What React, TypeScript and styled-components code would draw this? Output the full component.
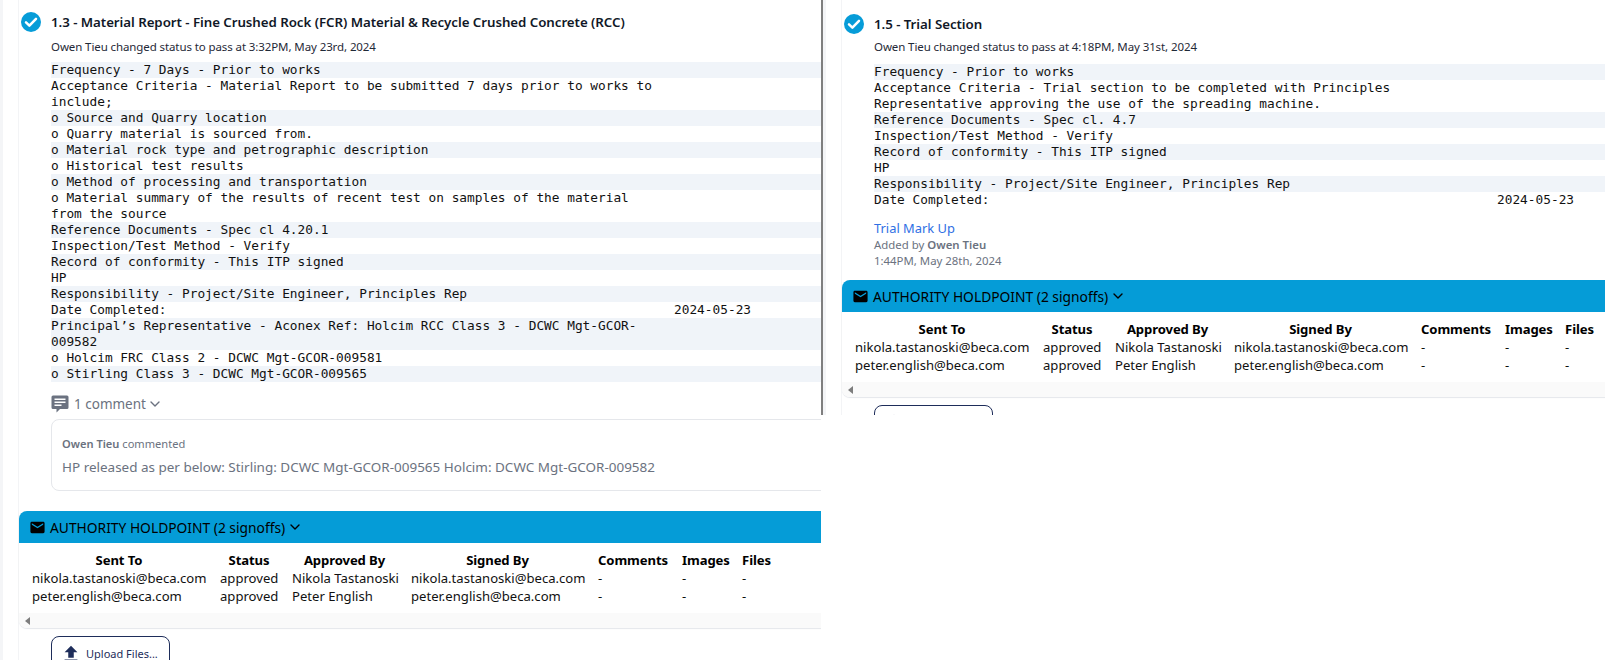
import React from "react";
import styled, { createGlobalStyle } from "styled-components";

const Global = createGlobalStyle`
  html, body { margin: 0; padding: 0; background: #fff; }
  body { font-family: "Noto Sans", "Liberation Sans", sans-serif; color: #000; overflow: hidden; }
`;

const Page = styled.div`
  display: flex;
  width: 1605px;
  height: 660px;
  align-items: flex-start;
  overflow: hidden;
`;

const Panel = styled.section<{ $left?: boolean }>`
  flex: none;
  box-sizing: border-box;
  overflow: hidden;
  background: #fff;
  width: ${(p) => (p.$left ? "821px" : "784px")};
  height: ${(p) => (p.$left ? "660px" : "415px")};
  padding-left: 3px;
  box-shadow: inset 3px 0 0 #f4f5f7;
  ${(p) => (p.$left ? "" : "border-left: 2px solid #7f7f7f;")}
`;

const Card = styled.article<{ $top: number }>`
  width: 900px;
  height: 100%;
  margin-left: 16px;
  box-sizing: border-box;
  padding-top: ${(p) => p.$top}px;
  box-shadow: -1px 0 0 #f3f4f6;
`;

const Head = styled.header`
  display: flex;
  align-items: center;
  gap: 10px;
  height: 20px;
  padding-left: 2px;
`;

const Title = styled.h3`
  margin: 0;
  font-size: 13.3px;
  font-weight: 600;
  letter-spacing: -0.05px;
  line-height: 20px;
  white-space: nowrap;
  color: #111827;
`;

const Indented = styled.div`
  padding-left: 32px;
`;

const StatusLine = styled.p<{ $gapTop: number; $gapBottom: number }>`
  margin: ${(p) => p.$gapTop}px 0 ${(p) => p.$gapBottom}px;
  font-size: 11.5px;
  line-height: 17px;
  letter-spacing: -0.1px;
  color: #1f2937;
  white-space: nowrap;
`;

const Grid = styled.div`
  font-family: "DejaVu Sans Mono", "Liberation Mono", monospace;
  font-size: 12.8px;
  line-height: 16px;
  color: #111;
`;

const Row = styled.div`
  display: grid;
  grid-template-columns: 610px 1fr;
  column-gap: 13px;
  &:nth-child(odd) { background: #f0f4f9; }
`;

const Comments = styled.div`
  margin-top: 13px;
`;

const CommentToggle = styled.div`
  display: flex;
  align-items: center;
  gap: 3px;
  height: 18px;
  font-size: 13.5px;
  color: #6b7280;
  & > span { margin-left: 2px; }
`;

const CommentBox = styled.div`
  box-sizing: border-box;
  height: 72px;
  margin-top: 6px;
  padding: 15px 10px;
  border: 1px solid #e5e7eb;
  border-radius: 8px;
`;

const CommentMeta = styled.div`
  font-size: 11.1px;
  line-height: 17px;
  color: #6b7280;
  & b { font-weight: 600; }
`;

const CommentText = styled.div`
  margin-top: 6px;
  font-size: 13.48px;
  line-height: 18px;
  color: #6b7280;
  white-space: nowrap;
`;

const Attachment = styled.div`
  margin-top: 11px;
`;

const FileLink = styled.a`
  display: block;
  font-size: 12.9px;
  line-height: 18px;
  color: #2f6fe4;
`;

const FileMeta = styled.div`
  font-size: 11.4px;
  line-height: 16px;
  color: #6b7280;
  & b { font-weight: 600; }
`;

const Authority = styled.div<{ $top: number }>`
  margin-top: ${(p) => p.$top}px;
  border-radius: 8px;
  background: #fff;
  box-shadow: 0 1px 1px #e5e7eb;
  overflow: hidden;
`;

const AuthorityBar = styled.div`
  display: flex;
  align-items: center;
  gap: 4px;
  height: 32px;
  padding-left: 10px;
  background: #059cd7;
  font-size: 13.8px;
  color: #000;
  white-space: nowrap;
`;

const TableWrap = styled.div`
  padding: 8px 0 8px 6px;
`;

const Table = styled.table`
  border-collapse: collapse;
  table-layout: fixed;
  width: 753px;
  font-size: 13.1px;
  line-height: 18px;
`;

const Th = styled.th<{ $w: number }>`
  box-sizing: border-box;
  width: ${(p) => p.$w}px;
  padding: 0 7px;
  font-weight: 700;
  letter-spacing: -0.1px;
  text-align: center;
  white-space: nowrap;
  overflow: visible;
`;

const Td = styled.td`
  padding: 0 7px;
  white-space: nowrap;
  color: #111;
`;

const ScrollTrack = styled.div`
  display: flex;
  align-items: center;
  height: 15px;
  padding-left: 6px;
  background: #fafafa;
`;

const ScrollArrow = styled.span`
  width: 0;
  height: 0;
  border-style: solid;
  border-width: 4px 5px 4px 0;
  border-color: transparent #7d7d7d transparent transparent;
`;

const UploadButton = styled.button`
  display: flex;
  align-items: center;
  gap: 4px;
  box-sizing: border-box;
  width: 119px;
  height: 35px;
  margin-top: 8px;
  padding: 0 0 0 8px;
  border: 1px solid #1e2d5a;
  border-radius: 8px;
  background: #fff;
  font-family: inherit;
  font-size: 11px;
  color: #1e2d5a;
  white-space: nowrap;
`;

const CheckBadge = () => (
  <svg width="20" height="20" viewBox="0 0 20 20" style={{ flex: "none" }}>
    <circle cx="10" cy="10" r="10" fill="#069cd8" />
    <path d="M5 10.4l3.4 3.3L15 6.8" fill="none" stroke="#fff" strokeWidth="2.5" strokeLinecap="round" strokeLinejoin="round" />
  </svg>
);

const Chevron = () => (
  <svg width="12" height="12" viewBox="0 0 12 12">
    <path d="M2 4l4 4 4-4" fill="none" stroke="currentColor" strokeWidth="1.4" strokeLinecap="round" strokeLinejoin="round" />
  </svg>
);

const ChatIcon = () => (
  <svg width="18" height="18" viewBox="0 0 18 18">
    <path
      fillRule="evenodd"
      fill="#6b7280"
      d="M2 0.5h14a1.5 1.5 0 0 1 1.5 1.5v10.5a1.5 1.5 0 0 1-1.5 1.5H9l-3.5 3.5V14H2a1.5 1.5 0 0 1-1.5-1.5V2A1.5 1.5 0 0 1 2 .5zM3.5 3.5v1.5h11V3.5zM3.5 6.5V8h11V6.5zM3.5 9.5V11h7V9.5z"
    />
  </svg>
);

const MailIcon = () => (
  <svg width="17" height="17" viewBox="0 0 24 24">
    <path d="M20 4H4c-1.1 0-1.99.9-1.99 2L2 18c0 1.1.9 2 2 2h16c1.1 0 2-.9 2-2V6c0-1.1-.9-2-2-2zm0 4l-8 5-8-5V6l8 5 8-5v2z" />
  </svg>
);

const UploadIcon = () => (
  <svg width="22" height="22" viewBox="0 0 24 24">
    <path fill="#1e2d5a" d="M9 16h6v-6h4l-7-7-7 7h4zm-4 2h14v2H5z" />
  </svg>
);

const columns: [string, number][] = [
  ["Sent To", 188],
  ["Status", 72],
  ["Approved By", 119],
  ["Signed By", 187],
  ["Comments", 84],
  ["Images", 60],
  ["Files", 43],
];

const signoffs = [
  ["nikola.tastanoski@beca.com", "approved", "Nikola Tastanoski", "nikola.tastanoski@beca.com", "-", "-", "-"],
  ["peter.english@beca.com", "approved", "Peter English", "peter.english@beca.com", "-", "-", "-"],
];

const AuthoritySection = ({ top }: { top: number }) => (
  <>
    <Authority $top={top}>
      <AuthorityBar>
        <MailIcon />
        <span>AUTHORITY HOLDPOINT (2 signoffs)</span>
        <Chevron />
      </AuthorityBar>
      <TableWrap>
        <Table>
          <thead>
            <tr>
              {columns.map(([name, w]) => (
                <Th key={name} $w={w}>{name}</Th>
              ))}
            </tr>
          </thead>
          <tbody>
            {signoffs.map((row) => (
              <tr key={row[0]}>
                {row.map((cell, i) => (
                  <Td key={i}>{cell}</Td>
                ))}
              </tr>
            ))}
          </tbody>
        </Table>
      </TableWrap>
      <ScrollTrack>
        <ScrollArrow />
      </ScrollTrack>
    </Authority>
    <Indented>
      <UploadButton>
        <UploadIcon />
        Upload Files...
      </UploadButton>
    </Indented>
  </>
);

const Rows = ({ rows }: { rows: [string, string?][] }) => (
  <Grid>
    {rows.map(([a, b], i) => (
      <Row key={i}>
        <div>{a}</div>
        <div>{b}</div>
      </Row>
    ))}
  </Grid>
);

const leftRows: [string, string?][] = [
  ["Frequency - 7 Days - Prior to works"],
  ["Acceptance Criteria - Material Report to be submitted 7 days prior to works to include;"],
  ["o Source and Quarry location"],
  ["o Quarry material is sourced from."],
  ["o Material rock type and petrographic description"],
  ["o Historical test results"],
  ["o Method of processing and transportation"],
  ["o Material summary of the results of recent test on samples of the material from the source"],
  ["Reference Documents - Spec cl 4.20.1"],
  ["Inspection/Test Method - Verify"],
  ["Record of conformity - This ITP signed"],
  ["HP"],
  ["Responsibility - Project/Site Engineer, Principles Rep"],
  ["Date Completed:", "2024-05-23"],
  ["Principal’s Representative - Aconex Ref: Holcim RCC Class 3 - DCWC Mgt-GCOR-009582"],
  ["o Holcim FRC Class 2 - DCWC Mgt-GCOR-009581"],
  ["o Stirling Class 3 - DCWC Mgt-GCOR-009565"],
];

const rightRows: [string, string?][] = [
  ["Frequency - Prior to works"],
  ["Acceptance Criteria - Trial section to be completed with Principles Representative approving the use of the spreading machine."],
  ["Reference Documents - Spec cl. 4.7"],
  ["Inspection/Test Method - Verify"],
  ["Record of conformity - This ITP signed"],
  ["HP"],
  ["Responsibility - Project/Site Engineer, Principles Rep"],
  ["Date Completed:", "2024-05-23"],
];

export default function App() {
  return (
    <Page>
      <Global />
      <Panel $left>
        <Card $top={12}>
          <Head>
            <CheckBadge />
            <Title>1.3 - Material Report - Fine Crushed Rock (FCR) Material &amp; Recycle Crushed Concrete (RCC)</Title>
          </Head>
          <Indented>
            <StatusLine $gapTop={6} $gapBottom={7}>Owen Tieu changed status to pass at 3:32PM, May 23rd, 2024</StatusLine>
            <Rows rows={leftRows} />
            <Comments>
              <CommentToggle>
                <ChatIcon />
                <span>1 comment</span>
                <Chevron />
              </CommentToggle>
              <CommentBox>
                <CommentMeta><b>Owen Tieu</b> commented</CommentMeta>
                <CommentText>HP released as per below: Stirling: DCWC Mgt-GCOR-009565 Holcim: DCWC Mgt-GCOR-009582</CommentText>
              </CommentBox>
            </Comments>
          </Indented>
          <AuthoritySection top={20} />
        </Card>
      </Panel>
      <Panel>
        <Card $top={14}>
          <Head>
            <CheckBadge />
            <Title>1.5 - Trial Section</Title>
          </Head>
          <Indented>
            <StatusLine $gapTop={4} $gapBottom={9}>Owen Tieu changed status to pass at 4:18PM, May 31st, 2024</StatusLine>
            <Rows rows={rightRows} />
            <Attachment>
              <FileLink>Trial Mark Up</FileLink>
              <FileMeta>Added by <b>Owen Tieu</b></FileMeta>
              <FileMeta>1:44PM, May 28th, 2024</FileMeta>
            </Attachment>
          </Indented>
          <AuthoritySection top={11} />
        </Card>
      </Panel>
    </Page>
  );
}
